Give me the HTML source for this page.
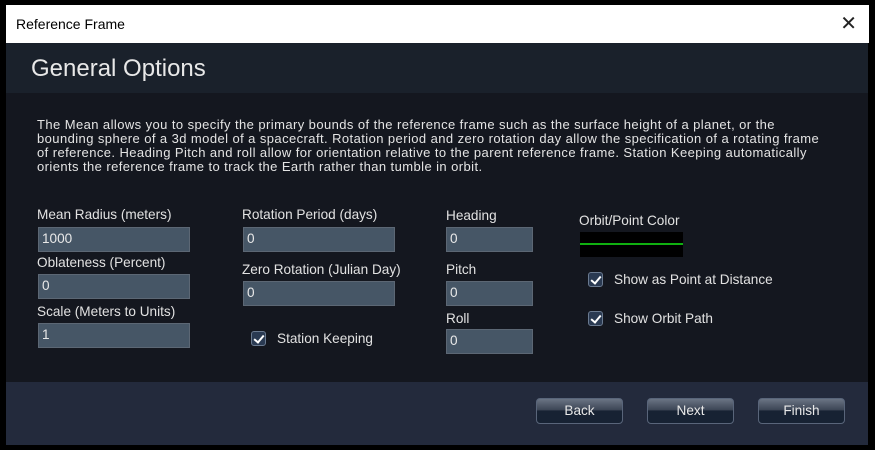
<!DOCTYPE html>
<html><head><style>
*{margin:0;padding:0;box-sizing:border-box}
body{width:875px;height:450px;background:#000;position:relative;overflow:hidden;font-family:"Liberation Sans",sans-serif}
.a{position:absolute}
.title{left:6px;top:5px;width:863px;height:38px;background:#fff;color:#000;font-size:14px;line-height:38px;padding-left:10px}
.x{right:12px;top:0;font-size:20px;color:#222;line-height:38px;font-weight:300}
.head{left:6px;top:43px;width:862px;height:50px;background:#1a212b;color:#e8e8e8;font-size:24px;padding:12px 0 0 25px}
.body{left:6px;top:93px;width:862px;height:289px;background:#14171f}
.foot{left:6px;top:382px;width:862px;height:63px;background:#232a3c}
.desc{left:37px;top:118px;white-space:nowrap;color:#e4e4e4;font-size:13px;letter-spacing:0.42px;line-height:14px}
.lbl{color:#e2e2e2;font-size:13.6px;white-space:nowrap}
.in{background:#465666;border:1px solid #5c6774;color:#e8e8e8;font-size:13.6px;line-height:22px;padding-left:3px;height:25px}
.cb{width:15px;height:15px;background:#2a3a52;border:1px solid #6a7a90;border-radius:3px}
.cb:after{content:"";position:absolute;left:4px;top:1px;width:4px;height:8px;border:solid #fff;border-width:0 2px 2px 0;transform:rotate(40deg)}
.btn{width:87px;height:26px;border:1px solid #59657a;border-radius:4px;background:linear-gradient(#6a7484 0%,#3d4656 45%,#172233 50%,#172233 100%);color:#e8e8e8;font-size:13.6px;text-align:center;line-height:24px}
</style></head><body>
<div class="a title">Reference Frame<span class="a x">✕</span></div>
<div class="a head">General Options</div>
<div class="a body"></div>
<div class="a foot"></div>
<div class="a desc">The Mean allows you to specify the primary bounds of the reference frame such as the surface height of a planet, or the<br>bounding sphere of a 3d model of a spacecraft. Rotation period and zero rotation day allow the specification of a rotating frame<br>of reference. Heading Pitch and roll allow for orientation relative to the parent reference frame. Station Keeping automatically<br>orients the reference frame to track the Earth rather than tumble in orbit.</div>

<div class="a lbl" style="left:37px;top:207px">Mean Radius (meters)</div>
<div class="a in" style="left:38px;top:227px;width:152px">1000</div>
<div class="a lbl" style="left:37px;top:255px">Oblateness (Percent)</div>
<div class="a in" style="left:38px;top:274px;width:152px">0</div>
<div class="a lbl" style="left:37px;top:304px">Scale (Meters to Units)</div>
<div class="a in" style="left:38px;top:323px;width:152px">1</div>

<div class="a lbl" style="left:242px;top:207px">Rotation Period (days)</div>
<div class="a in" style="left:243px;top:227px;width:152px">0</div>
<div class="a lbl" style="left:242px;top:262px">Zero Rotation (Julian Day)</div>
<div class="a in" style="left:243px;top:281px;width:152px">0</div>
<div class="a cb" style="left:251px;top:331px"></div>
<div class="a lbl" style="left:277px;top:331px">Station Keeping</div>

<div class="a lbl" style="left:446px;top:208px">Heading</div>
<div class="a in" style="left:446px;top:227px;width:87px">0</div>
<div class="a lbl" style="left:446px;top:262px">Pitch</div>
<div class="a in" style="left:446px;top:281px;width:87px">0</div>
<div class="a lbl" style="left:446px;top:311px">Roll</div>
<div class="a in" style="left:446px;top:329px;width:87px">0</div>

<div class="a lbl" style="left:579px;top:213px">Orbit/Point Color</div>
<div class="a" style="left:580px;top:232px;width:103px;height:25px;background:#000"><div class="a" style="left:0;top:11px;width:103px;height:2px;background:#10b010"></div></div>
<div class="a cb" style="left:588px;top:272px"></div>
<div class="a lbl" style="left:614px;top:272px">Show as Point at Distance</div>
<div class="a cb" style="left:588px;top:311px"></div>
<div class="a lbl" style="left:614px;top:311px">Show Orbit Path</div>

<div class="a btn" style="left:536px;top:398px">Back</div>
<div class="a btn" style="left:647px;top:398px">Next</div>
<div class="a btn" style="left:758px;top:398px">Finish</div>
</body></html>
